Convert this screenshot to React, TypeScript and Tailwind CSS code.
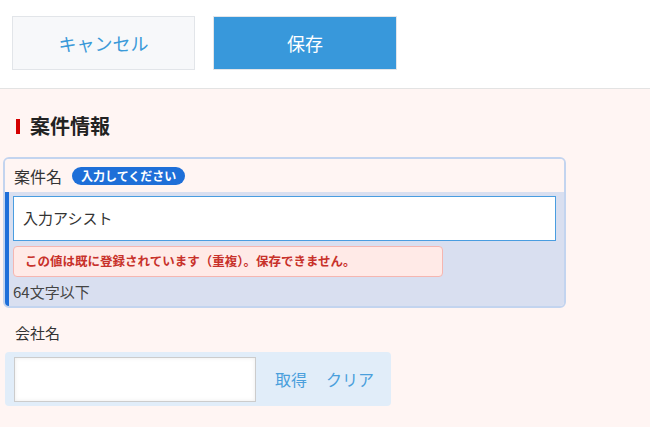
export default function App() {
  return (
    <div
      className="h-[427px] w-[650px] overflow-hidden bg-[#fff5f3] text-[#333]"
      style={{ fontFamily: '"Noto Sans CJK JP", "Noto Sans", sans-serif' }}
    >
      <div className="flex h-[89px] gap-[18px] border-b border-[#e3e3e3] bg-white pl-3 pt-4">
        <button className="h-[54px] w-[183px] border border-[#e2e5e9] bg-[#f7f8fa] text-[18px] text-[#3b9ad9]">
          キャンセル
        </button>
        <button className="h-[54px] w-[184px] border border-[#e2e5e9] bg-[#3898db] text-[18px] text-white">
          保存
        </button>
      </div>

      <div className="flex items-center gap-[10px] pl-4 pt-[25px]">
        <span className="h-[15px] w-1 bg-[#d40000]" />
        <h2 className="text-[20px] font-bold leading-6 text-[#222]">案件情報</h2>
      </div>

      <div className="ml-[3px] mt-[19px] w-[563px] overflow-hidden rounded-[6px] border-2 border-[#c3d4ef]">
        <div className="flex h-[33px] items-center gap-[10px] bg-[#fff5f3] pl-[9px]">
          <span className="text-[16px]">案件名</span>
          <span className="rounded-full bg-[#1e6fd8] px-[9px] text-[12px] font-bold leading-[18px] text-white">
            入力してください
          </span>
        </div>
        <div className="border-l-4 border-l-[#1f6fd9] bg-[#d9dff0] pb-[2px] pl-1 pr-2 pt-[4px]">
          <div className="flex h-[45px] items-center border border-solid border-[color:#4a9de0] bg-white pl-[9px] text-[15px]">
            入力アシスト
          </div>
          <div className="mt-[5px] flex h-[31px] w-[430px] items-center rounded-[4px] border border-[#f5b6b1] bg-[#ffeae7] pl-[11px] text-[12.5px] font-bold text-[#c8312a]">
            この値は既に登録されています（重複）。保存できません。
          </div>
          <div className="mt-[3px] text-[15px] leading-6 text-[#444]">64文字以下</div>
        </div>
      </div>

      <div className="pl-[15px] pt-[13px] text-[15px] leading-6">会社名</div>
      <div className="ml-[5px] mt-[7px] flex h-[54px] w-[386px] items-center rounded-[4px] bg-[#e1edf9] pl-[9px]">
        <div className="h-[45px] w-[242px] border border-[#cccccc] bg-white shadow-[inset_0_0_4px_rgba(0,0,0,0.08)]" />
        <span className="ml-[19px] text-[16px] text-[#4a9fdc]">取得</span>
        <span className="ml-[19px] text-[16px] text-[#4a9fdc]">クリア</span>
      </div>
    </div>
  );
}
